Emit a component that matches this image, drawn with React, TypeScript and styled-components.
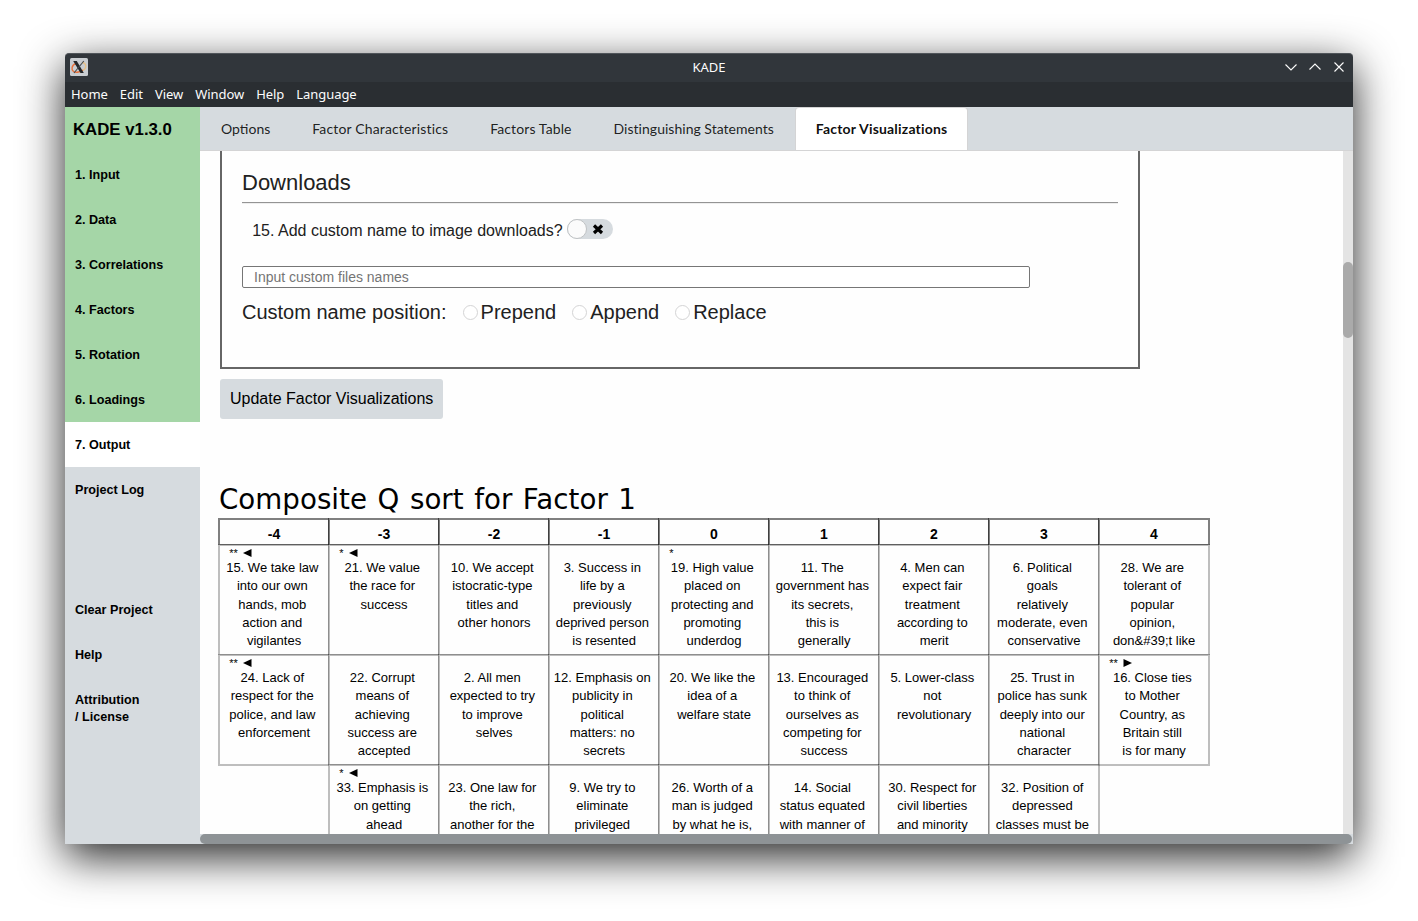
import React from "react";
import styled, { createGlobalStyle, css } from "styled-components";

const Global = createGlobalStyle`
  * { box-sizing: border-box; }
  body { margin: 0; background: #fff; overflow: hidden; }
`;

const arial = `"Liberation Sans", Arial, sans-serif`;

const Desktop = styled.div`
  width: 1418px;
  height: 921px;
  padding: 53px 65px 77px;
  background: #fff;
  overflow: hidden;
`;

const AppWindow = styled.div`
  display: flex;
  flex-direction: column;
  width: 1288px;
  height: 791px;
  border-radius: 4px 4px 0 0;
  box-shadow: 0 13px 44px rgba(0, 0, 0, 0.86);
  font-family: ${arial};
`;

const TitleBar = styled.header`
  display: grid;
  grid-template-columns: 76px 1fr 76px;
  align-items: center;
  height: 29px;
  padding-bottom: 2px;
  border-top: 1px solid #50555a;
  border-radius: 4px 4px 0 0;
  background: #31363b;
  color: #fcfcfc;
  font: 13px "Noto Sans", sans-serif;
`;

const AppIcon = styled.svg`
  display: block;
  width: 18px;
  height: 18px;
  margin-left: 5px;
`;

const WindowName = styled.span`
  text-align: center;
`;

const WindowControls = styled.div`
  display: flex;
  justify-content: flex-end;
  gap: 8px;
  padding-right: 6px;

  svg {
    display: block;
    width: 16px;
    height: 16px;
    fill: none;
    stroke: #fcfcfc;
    stroke-width: 1.1;
  }
`;

const MenuBar = styled.nav`
  display: flex;
  align-items: center;
  gap: 12px;
  height: 25px;
  padding: 0 6px 2px;
  background: #2a2e32;
  color: #fcfcfc;
  font: 13px "Noto Sans", sans-serif;
  letter-spacing: -0.05px;
`;

const Body = styled.div`
  display: flex;
  flex: 1;
  min-height: 0;
`;

const Sidebar = styled.aside`
  display: flex;
  flex-direction: column;
  width: 135px;
  background: #d6dbdf;
`;

const Brand = styled.div`
  height: 45px;
  padding-left: 8px;
  background: #a5d6a7;
  font-size: 16.8px;
  font-weight: bold;
  line-height: 45px;
`;

const SideItem = styled.a<{ $tone?: "done" | "active"; $gapAbove?: boolean }>`
  min-height: 45px;
  padding: 15px 10px 13px;
  margin-top: ${(p) => (p.$gapAbove ? "75px" : "0")};
  background: ${(p) => (p.$tone === "done" ? "#a5d6a7" : p.$tone === "active" ? "#fff" : "transparent")};
  color: #000;
  font-size: 12.6px;
  font-weight: bold;
  line-height: 17px;
  white-space: pre-line;
`;

const Main = styled.main`
  display: flex;
  flex-direction: column;
  flex: 1;
  min-width: 0;
  background: #fefefe;
`;

const TabStrip = styled.div`
  display: flex;
  height: 44px;
  border-bottom: 1px solid #d4d4d5;
  background: #d6dbdf;
`;

const Tab = styled.button<{ $active?: boolean; $tracking: number }>`
  height: 43px;
  padding: 0 21px;
  border: 0;
  background: transparent;
  color: rgba(0, 0, 0, 0.87);
  font: 14px Lato, sans-serif;
  letter-spacing: ${(p) => p.$tracking}px;
  white-space: nowrap;
  ${(p) =>
    p.$active &&
    css`
      padding: 0 20px 2px;
      border: 1px solid #d4d4d5;
      border-bottom: 0;
      border-radius: 4px 4px 0 0;
      background: #fff;
      color: rgba(0, 0, 0, 0.95);
      font-weight: bold;
    `}
`;

const Viewport = styled.div`
  display: flex;
  height: 683px;
`;

const Page = styled.div`
  flex: 1;
  min-width: 0;
  padding-left: 20px;
  overflow: hidden;
`;

const ScrollTrack = styled.div`
  width: 10px;
  padding-top: 111px;
  background: #e4e4e4;
`;

const ScrollThumb = styled.div`
  height: 76px;
  border-radius: 5px;
  background: #aaa;
`;

const BottomTrack = styled.div`
  height: 10px;
  padding-right: 1px;
  background: #d6dbdf;
`;

const BottomThumb = styled.div`
  height: 10px;
  border-radius: 5px;
  background: #8e9396;
`;

const OptionsPanel = styled.section`
  width: 920px;
  height: 218px;
  padding: 17px 20px 0;
  border: 2px solid #666;
  border-top: 0;
  color: #212121;
`;

const PanelHeading = styled.h2`
  height: 35px;
  margin: 0 0 16px;
  border-bottom: 1px solid #949494;
  box-shadow: 0 1px #eee;
  font-size: 22px;
  font-weight: normal;
  line-height: 29px;
`;

const OptionRow = styled.div`
  display: flex;
  align-items: center;
  gap: 4.6px;
  height: 24px;
  padding-left: 10.2px;
  font-size: 16px;
`;

const Toggle = styled.span`
  display: flex;
  align-items: center;
  width: 46px;
  height: 20px;
  margin-top: -4px;
  border-radius: 10px;
  background: #d6dbdf;
  color: #000;
`;

const Knob = styled.span`
  width: 20px;
  height: 20px;
  border: 1.5px solid #bfc2c4;
  border-radius: 50%;
  background: #fbfbfb;
`;

const Cross = styled.svg`
  width: 12px;
  height: 12px;
  margin-left: 5px;
`;

const NameInput = styled.input`
  display: block;
  width: 788px;
  height: 22px;
  margin-top: 23px;
  padding: 0 11px;
  border: 1px solid #767676;
  border-radius: 2px;
  background: #fff;
  font: 14px ${arial};

  &::placeholder { color: #757575; }
`;

const PositionRow = styled.div`
  display: flex;
  align-items: center;
  height: 24px;
  margin-top: 12px;
  font-size: 20px;
`;

const Choice = styled.label`
  display: flex;
  align-items: center;
  gap: 3px;
  margin-left: 16px;
`;

const Radio = styled.span`
  width: 15px;
  height: 15px;
  margin-top: 1px;
  border: 1px solid #d4d4d5;
  border-radius: 50%;
  background: #fff;
`;

const UpdateButton = styled.button`
  display: block;
  width: 223px;
  height: 40px;
  margin-top: 10px;
  padding: 0 0 0 0.4px;
  border: 0;
  border-radius: 3px;
  background: #d6dbdf;
  color: #000;
  font: 16px ${arial};
`;

const ChartTitle = styled.h1`
  height: 37px;
  margin: 62px 0 0 -1px;
  color: #000;
  font: 27.7px/38px "DejaVu Sans", sans-serif;
  letter-spacing: 0.03px;
  word-spacing: 1.7px;
  white-space: nowrap;
`;

const SortGrid = styled.div`
  display: grid;
  grid-template-columns: repeat(9, 110px);
  grid-template-rows: 26px repeat(3, 110px);
  margin: 1px 0 0 -1px;
`;

const HeaderCell = styled.div`
  margin: -1px 0 0 -1px;
  padding-right: 1px;
  border: solid rgba(0, 0, 0, 0.5);
  border-width: 2px 0 1px 2px;
  box-shadow: inset -1px 0 rgba(0, 0, 0, 0.5);
  font-size: 14px;
  font-weight: bold;
  line-height: 28px;
  text-align: center;

  &:nth-child(9) {
    margin-right: -1px;
    padding-right: 0;
    border-right-width: 2px;
    box-shadow: none;
  }
`;

const StatementCell = styled.div<{ $lastInRow: boolean; $lastInColumn: boolean }>`
  margin: -1px ${(p) => (p.$lastInRow ? "-1px" : "0")} ${(p) => (p.$lastInColumn ? "-1px" : "0")} -1px;
  border-style: solid;
  border-color: rgba(0, 0, 0, 0.25);
  border-width: 2px ${(p) => (p.$lastInRow ? "2px" : "1px")} ${(p) => (p.$lastInColumn ? "2px" : "1px")} 2px;
  padding-left: 0.2px;
  color: #000;
  font-size: 13px;
  line-height: 18.2px;
  text-align: center;
  white-space: pre;
`;

const EmptyCell = styled.div``;

const Marks = styled.div`
  display: flex;
  gap: 5.5px;
  height: 13.15px;
  padding: 0 0 0 9px;
  font-size: 11px;
  line-height: 14px;

  svg { width: 9px; height: 8px; margin-top: 3px; }
`;

type Statement = { text: string; stars?: string; arrow?: "left" | "right" };

const stages = ["1. Input", "2. Data", "3. Correlations", "4. Factors", "5. Rotation", "6. Loadings"];
const menus = ["Home", "Edit", "View", "Window", "Help", "Language"];
const tabs = [
  { label: "Options", tracking: 0 },
  { label: "Factor Characteristics", tracking: 0.15 },
  { label: "Factors Table", tracking: 0.11 },
  { label: "Distinguishing Statements", tracking: 0.02 },
  { label: "Factor Visualizations", tracking: 0.19 },
];
const scores = ["-4", "-3", "-2", "-1", "0", "1", "2", "3", "4"];

const rows: (Statement | null)[][] = [
  [
    { text: "15. We take law|into our own|hands, mob|action and|vigilantes", stars: "**", arrow: "left" },
    { text: "21. We value|the race for|success", stars: "*", arrow: "left" },
    { text: "10. We accept|istocratic-type|titles and|other honors" },
    { text: "3. Success in|life by a|previously|deprived person|is resented" },
    { text: "19. High value|placed on|protecting and|promoting|underdog", stars: "*" },
    { text: "11. The|government has|its secrets,|this is|generally" },
    { text: "4. Men can|expect fair|treatment|according to|merit" },
    { text: "6. Political|goals|relatively|moderate, even|conservative" },
    { text: "28. We are|tolerant of|popular|opinion,|don&#39;t like" },
  ],
  [
    { text: "24. Lack of|respect for the|police, and law|enforcement", stars: "**", arrow: "left" },
    { text: "22. Corrupt|means of|achieving|success are|accepted" },
    { text: "2. All men|expected to try|to improve|selves" },
    { text: "12. Emphasis on|publicity in|political|matters: no|secrets" },
    { text: "20. We like the|idea of a|welfare state" },
    { text: "13. Encouraged|to think of|ourselves as|competing for|success" },
    { text: "5. Lower-class|not|revolutionary" },
    { text: "25. Trust in|police has sunk|deeply into our|national|character" },
    { text: "16. Close ties|to Mother|Country, as|Britain still|is for many", stars: "**", arrow: "right" },
  ],
  [
    null,
    { text: "33. Emphasis is|on getting|ahead", stars: "*", arrow: "left" },
    { text: "23. One law for|the rich,|another for the|" },
    { text: "9. We try to|eliminate|privileged|" },
    { text: "26. Worth of a|man is judged|by what he is,|" },
    { text: "14. Social|status equated|with manner of|" },
    { text: "30. Respect for|civil liberties|and minority|" },
    { text: "32. Position of|depressed|classes must be|" },
    null,
  ],
];

function Arrow({ direction }: { direction: "left" | "right" }) {
  return (
    <svg viewBox="0 0 9 8">
      <path d={direction === "left" ? "M0 4 8.500 0V8Z" : "M9 4 .5 0V8Z"} />
    </svg>
  );
}

function Cell({ row, column }: { row: number; column: number }) {
  const statement = rows[row][column];
  if (!statement) return <EmptyCell />;
  return (
    <StatementCell $lastInRow={!rows[row][column + 1]} $lastInColumn={!rows[row + 1]?.[column]}>
      <Marks>
        {statement.stars && <span>{statement.stars}</span>}
        {statement.arrow && <Arrow direction={statement.arrow} />}
      </Marks>
      {statement.text.split("|").map((line, i, all) => (
        <div key={i}>{i < all.length - 1 ? line + "\u00a0" : line}</div>
      ))}
    </StatementCell>
  );
}

export default function App() {
  return (
    <Desktop>
      <Global />
      <AppWindow>
        <TitleBar>
          <AppIcon viewBox="0 0 18 18">
            <rect width="18" height="18" rx="1.5" fill="#c9cdd1" />
            <path d="M6 5.500C1.500 7 1 11.500 3.500 13.500 6 15 11 14 13 12" fill="none" stroke="#e8703a" strokeWidth="1.400" />
            <path d="M12.500 4.500C16.500 5.500 17 10 13 12.500" fill="none" stroke="#e5c088" strokeWidth="1.300" />
            <path d="M3.200 3H6.800L13.800 15H10.500Z" fill="#232629" />
            <path d="M13.800 3 4 15" stroke="#45494d" strokeWidth="1.100" />
          </AppIcon>
          <WindowName>KADE</WindowName>
          <WindowControls>
            <svg viewBox="0 0 16 16"><path d="m2.500 5.500 5.500 5.500 5.500-5.500" /></svg>
            <svg viewBox="0 0 16 16"><path d="m2.500 10.500 5.500-5.500 5.500 5.500" /></svg>
            <svg viewBox="0 0 16 16"><path d="m3.500 3.500 9 9m0-9-9 9" /></svg>
          </WindowControls>
        </TitleBar>
        <MenuBar>{menus.map((m) => <span key={m}>{m}</span>)}</MenuBar>
        <Body>
          <Sidebar>
            <Brand>KADE v1.3.0</Brand>
            {stages.map((s) => <SideItem key={s} $tone="done">{s}</SideItem>)}
            <SideItem $tone="active">7. Output</SideItem>
            <SideItem>Project Log</SideItem>
            <SideItem $gapAbove>Clear Project</SideItem>
            <SideItem>Help</SideItem>
            <SideItem>{"Attribution\n/ License"}</SideItem>
          </Sidebar>
          <Main>
            <TabStrip>
              {tabs.map((t, i) => (
                <Tab key={t.label} $tracking={t.tracking} $active={i === tabs.length - 1}>{t.label}</Tab>
              ))}
            </TabStrip>
            <Viewport>
              <Page>
                <OptionsPanel>
                  <PanelHeading>Downloads</PanelHeading>
                  <OptionRow>
                    15. Add custom name to image downloads?
                    <Toggle>
                      <Knob />
                      <Cross viewBox="0 0 12 12">
                        <path d="m2 2.500 8 7.500m0-7.500-8 7.500" stroke="#000" strokeWidth="3.200" />
                      </Cross>
                    </Toggle>
                  </OptionRow>
                  <NameInput placeholder="Input custom files names" />
                  <PositionRow>
                    Custom name position:
                    {["Prepend", "Append", "Replace"].map((c) => (
                      <Choice key={c}><Radio />{c}</Choice>
                    ))}
                  </PositionRow>
                </OptionsPanel>
                <UpdateButton>Update Factor Visualizations</UpdateButton>
                <ChartTitle>Composite Q sort for Factor 1</ChartTitle>
                <SortGrid>
                  {scores.map((s) => <HeaderCell key={s}>{s}</HeaderCell>)}
                  {rows.map((r, row) => r.map((_, column) => <Cell key={`${row}-${column}`} row={row} column={column} />))}
                </SortGrid>
              </Page>
              <ScrollTrack><ScrollThumb /></ScrollTrack>
            </Viewport>
            <BottomTrack><BottomThumb /></BottomTrack>
          </Main>
        </Body>
      </AppWindow>
    </Desktop>
  );
}
